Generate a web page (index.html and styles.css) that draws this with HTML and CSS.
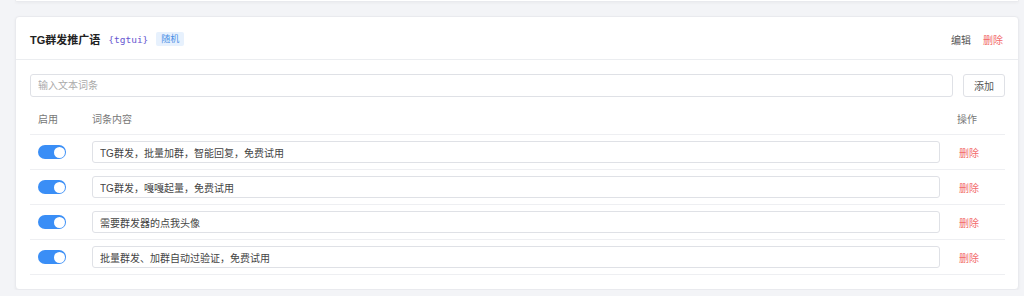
FILE: index.html
```html
<!DOCTYPE html>
<html>
<head>
    <meta charset="UTF-8">
    <title>词条设置</title>
    <link rel="stylesheet" href="styles.css">
</head>
<body>
    <div class="card card-prev"></div>

    <div class="card">
        <div class="card-head">
            <span class="title">TG群发推广语</span>
            <code class="var">{tgtui}</code>
            <span class="badge">随机</span>
            <span class="spacer"></span>
            <a class="link">编辑</a>
            <a class="link danger">删除</a>
        </div>

        <div class="card-body">
            <div class="add-row">
                <input type="text" class="field" placeholder="输入文本词条">
                <button class="btn">添加</button>
            </div>

            <div class="table">
                <div class="tr th">
                    <div class="c-switch">启用</div>
                    <div class="c-text">词条内容</div>
                    <div class="c-op">操作</div>
                </div>
                <div class="tr">
                    <div class="c-switch"><span class="switch on"></span></div>
                    <div class="c-text"><input type="text" class="field" value="TG群发，批量加群，智能回复，免费试用"></div>
                    <div class="c-op"><a class="link danger">删除</a></div>
                </div>
                <div class="tr">
                    <div class="c-switch"><span class="switch on"></span></div>
                    <div class="c-text"><input type="text" class="field" value="TG群发，嘎嘎起量，免费试用"></div>
                    <div class="c-op"><a class="link danger">删除</a></div>
                </div>
                <div class="tr">
                    <div class="c-switch"><span class="switch on"></span></div>
                    <div class="c-text"><input type="text" class="field" value="需要群发器的点我头像"></div>
                    <div class="c-op"><a class="link danger">删除</a></div>
                </div>
                <div class="tr">
                    <div class="c-switch"><span class="switch on"></span></div>
                    <div class="c-text"><input type="text" class="field" value="批量群发、加群自动过验证，免费试用"></div>
                    <div class="c-op"><a class="link danger">删除</a></div>
                </div>
            </div>
        </div>
    </div>
</body>
</html>
```

FILE: styles.css
```css
body { margin: 0; padding: 0 5px 0 15px; background: #f3f4f7; font-family: "Liberation Sans", "Noto Sans CJK SC", sans-serif; font-size: 10px; color: #333; }
.card { background: #fff; border: 1px solid #e9eaee; border-radius: 4px; box-shadow: 0 1px 3px rgba(0,0,0,.05); }
.card-prev { height: 1px; border-top: none; border-radius: 0 0 4px 4px; margin-bottom: 14px; }

.card-head { height: 43px; padding: 2px 15px 0 14px; box-sizing: border-box; border-bottom: 1px solid #ebedf0; display: flex; align-items: center; }
.title { font-size: 11px; font-weight: bold; color: #222; }
.var { font-family: "DejaVu Sans Mono", monospace; font-size: 9.5px; color: #6657d0; margin-left: 8px; }
.badge { margin-left: 8px; height: 14px; line-height: 14px; padding: 0 5px; font-size: 9px; color: #4b90e6; background: #e7f1fd; border-radius: 2px; }
.spacer { flex: 1; }
.link { cursor: pointer; color: #555; }
.link + .link { margin-left: 12px; }
.danger { color: #f26b6b; }

.card-body { padding: 14px 13px 14px 14px; }
.add-row { display: flex; gap: 10px; }
.field { flex: 1; height: 23px; box-sizing: border-box; border: 1px solid #dfe1e6; border-radius: 3px; padding: 0 7px; font-family: inherit; font-size: 10px; color: #444; background: #fff; outline: none; }
.field::placeholder { color: #aaa; }
.btn { width: 42px; height: 23px; border: 1px solid #dfe1e6; border-radius: 3px; background: #fff; color: #555; font-family: inherit; font-size: 10px; padding: 0; cursor: pointer; }

.table { margin-top: 8px; }
.tr { display: grid; grid-template-columns: 62px 1fr 65px; align-items: center; height: 35px; border-bottom: 1px solid #eeeff2; box-sizing: border-box; }
.th { height: 30px; color: #777; padding-bottom: 2px; }
.c-switch { padding-left: 8px; }
.c-text .field { width: 100%; height: 22px; display: block; }
.c-op { padding-left: 19px; }
.th .c-op { padding-left: 17px; }

.switch { display: block; position: relative; width: 28px; height: 14px; border-radius: 7px; background: #dcdfe6; }
.switch.on { background: #3a8ef6; }
.switch::after { content: ""; position: absolute; top: 1.5px; left: 1.5px; width: 11px; height: 11px; border-radius: 50%; background: #fff; }
.switch.on::after { left: 15.5px; }
```
